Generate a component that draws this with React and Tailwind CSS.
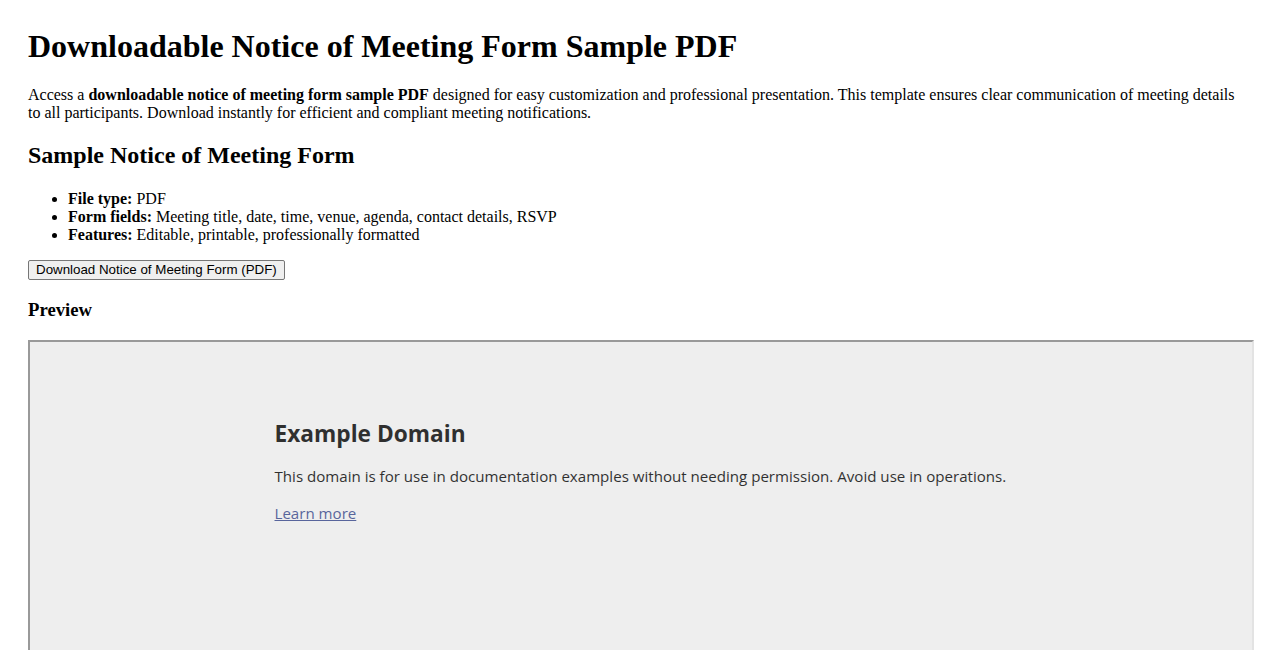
export default function App() {
  return (
    <div className="bg-white text-black px-[28px] pt-[28px] overflow-hidden h-[650px]" style={{ fontFamily: '"Liberation Serif", "Times New Roman", serif' }}>
      <h1 className="text-[32px] font-bold leading-[37px] mb-[21px]">Downloadable Notice of Meeting Form Sample PDF</h1>
      <p className="text-[16px] leading-[18px]">
        Access a <strong className="font-bold">downloadable notice of meeting form sample PDF</strong> designed for easy customization and professional presentation. This template ensures clear communication of meeting details to all participants. Download instantly for efficient and compliant meeting notifications.
      </p>
      <h2 className="text-[24px] font-bold leading-[28px] mt-[19px] mb-[21px]">Sample Notice of Meeting Form</h2>
      <ul className="list-disc pl-[40px] text-[16px] leading-[18px]">
        <li><strong>File type:</strong> PDF</li>
        <li><strong>Form fields:</strong> Meeting title, date, time, venue, agenda, contact details, RSVP</li>
        <li><strong>Features:</strong> Editable, printable, professionally formatted</li>
      </ul>
      <div className="mt-[16px] flex">
        <button
          className="border border-[#767676] rounded-[2px] bg-[#efefef] px-[7px] py-[1px] text-[13.33px] leading-[16px] text-black"
          style={{ fontFamily: '"Liberation Sans", Arial, sans-serif' }}
        >
          Download Notice of Meeting Form (PDF)
        </button>
      </div>
      <h3 className="text-[18.72px] font-bold leading-[22px] mt-[19px] mb-[19px]">Preview</h3>
      <div className="w-[1226px] h-[600px] border-2 border-t-[#999] border-l-[#999] border-r-[#e3e3e3] border-b-[#e3e3e3] bg-[#eee]">
        <div className="w-[733px] mx-auto pt-[60px] opacity-80 text-black" style={{ fontFamily: '"Open Sans", "Noto Sans", sans-serif' }}>
          <h1 className="text-[22.7px] font-bold leading-[32px] mt-[16px] mb-[16px]">Example Domain</h1>
          <p className="text-[15.1px] leading-[21px] whitespace-nowrap">This domain is for use in documentation examples without needing permission. Avoid use in operations.</p>
          <p className="text-[15.1px] leading-[21px] mt-[16px]">
            <a href="#" className="text-[#334488] underline">Learn more</a>
          </p>
        </div>
      </div>
    </div>
  );
}
